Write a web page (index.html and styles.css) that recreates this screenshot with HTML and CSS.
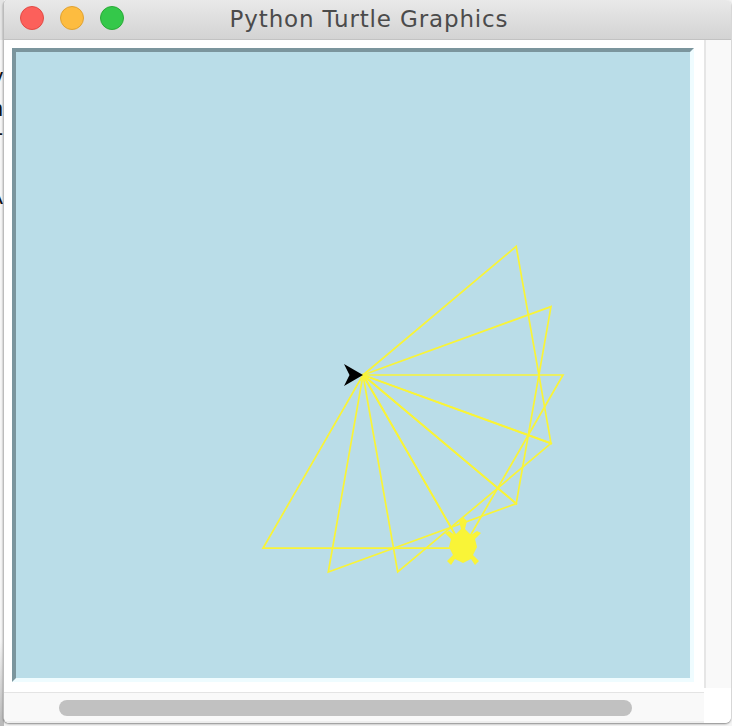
FILE: index.html
```html
<!DOCTYPE html>
<html>
<head>
<meta charset="utf-8">
<title>Python Turtle Graphics</title>
<link rel="stylesheet" href="styles.css">
</head>
<body>
<div class="backdrop">
  <div class="backtext">
    <div class="bl l1">y</div>
    <div class="bl l2">n</div>
    <div class="bl l3">-</div>
    <div class="bl l4">A</div>
  </div>
</div>
<div class="window">
  <div class="titlebar">
    <div class="lights">
      <span class="light red"></span>
      <span class="light yellow"></span>
      <span class="light green"></span>
    </div>
    <div class="title">Python Turtle Graphics</div>
    <div class="spacer"></div>
  </div>
  <div class="content">
    <div class="viewport">
      <div class="canvas">
        <svg class="drawing" width="674" height="626" viewBox="16 52 674 626" xmlns="http://www.w3.org/2000/svg">
          <g fill="none" stroke="#f9f437" stroke-width="1.7" stroke-linejoin="miter">
            <path d="M363 375 L516.2 246.4 L551 443.4 Z"/>
            <path d="M363 375 L551 306.6 L516.2 503.6 Z"/>
            <path d="M363 375 L563 375 L463 548.2 Z"/>
            <path d="M363 375 L551 443.4 L397.7 572 Z"/>
            <path d="M363 375 L516.2 503.6 L328.3 572 Z"/>
            <path d="M363 375 L463 548.2 L263 548.2 Z"/>
          </g>
          <polygon fill="#f9f437" points="463,517 459,521 461,529 455,535 449,531 445,533 451,539 449,547 453,555 447,561 451,565 455,559 463,563 471,559 475,565 479,561 473,555 477,547 475,539 481,533 477,531 471,535 465,529 467,521"/>
          <path fill="#000" d="M363 375 L344 364 L349.5 375 L344 386 Z"/>
        </svg>
      </div>
    </div>
    <div class="vscroll"></div>
    <div class="hscroll"><div class="thumb"></div></div>
    <div class="corner"></div>
  </div>
</div>
</body>
</html>
```

FILE: styles.css
```css
html, body {
  margin: 0;
  padding: 0;
}

body {
  width: 732px;
  height: 726px;
  overflow: hidden;
  background: #f4f4f4;
  position: relative;
  font-family: "DejaVu Sans", "Liberation Sans", sans-serif;
}

.backdrop {
  position: absolute;
  left: 0;
  top: 0;
  width: 4px;
  height: 726px;
  overflow: hidden;
  background: linear-gradient(#e4e4e4 0, #e4e4e4 40px, #f6f6f6 40px, #f6f6f6 640px, #b8b8b8 726px);
}

.backtext {
  position: absolute;
  right: 1px;
  top: 0;
  width: 40px;
  text-align: right;
  font-family: "Liberation Sans", sans-serif;
  font-size: 22px;
  color: #111;
}

.bl {
  position: absolute;
  right: 0;
  line-height: 1;
}

.l1 { top: 66px; }
.l2 { top: 98px; }
.l3 { top: 122px; }
.l4 { top: 186px; }

.window {
  position: relative;
  margin-left: 3px;
  width: 728px;
  height: 723px;
  box-sizing: border-box;
  border-left: 1px solid #bcbcbc;
  border-radius: 5px 5px 6px 6px;
  background: #ffffff;
  overflow: hidden;
  box-shadow: 0 1px 2px rgba(0, 0, 0, 0.45);
}

.titlebar {
  height: 39px;
  border-bottom: 1px solid #c2c2c2;
  background: linear-gradient(#e9e9e9, #d3d3d3);
  display: grid;
  grid-template-columns: 1fr auto 1fr;
  align-items: start;
}

.lights {
  display: flex;
  gap: 16px;
  padding: 6px 0 0 16px;
}

.light {
  width: 22px;
  height: 22px;
  border-radius: 50%;
  border: 1px solid;
  box-sizing: content-box;
}

.red { background: #fc605b; border-color: #e24b45; }
.yellow { background: #fdbc40; border-color: #e0a233; }
.green { background: #34c84a; border-color: #2aaa37; }

.title {
  padding: 5px 0 0 3px;
  font-size: 23px;
  line-height: 28px;
  color: #4b4b4b;
  letter-spacing: 0.85px;
  white-space: nowrap;
}

.content {
  display: grid;
  grid-template-columns: 700px 27px;
  grid-template-rows: 652px 31px;
}

.viewport {
  padding: 8px 0 0 8px;
  background: #ffffff;
}

.canvas {
  width: 674px;
  height: 626px;
  border-style: solid;
  border-width: 4px;
  border-color: #7b959d #effcff #effcff #7b959d;
  background: #badde8;
}

.drawing {
  display: block;
}

.vscroll {
  margin-bottom: 4px;
  border-left: 2px solid #e6e6e6;
  background: #f9f9f9;
}

.hscroll {
  border-top: 1px solid #e4e4e4;
  border-bottom: 2px solid #eeeeee;
  background: #f9f9f9;
  padding: 7px 0 0 55px;
  box-sizing: border-box;
}

.thumb {
  width: 573px;
  height: 16px;
  border-radius: 8px;
  background: #c1c1c1;
}

.corner {
  background: #ffffff;
}
```
